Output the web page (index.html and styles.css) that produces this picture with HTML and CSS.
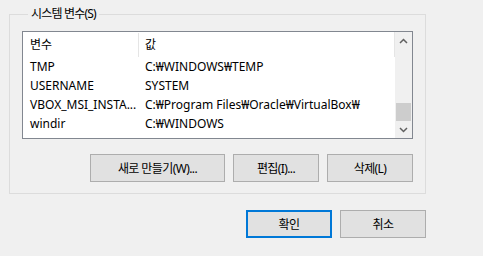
FILE: index.html
```html
<!DOCTYPE html>
<html lang="ko">
<head>
    <meta charset="UTF-8">
    <title>환경 변수</title>
    <link rel="stylesheet" href="styles.css">
</head>
<body>

    <!-- System variables group -->
    <fieldset class="group">
        <legend>시스템 변수(S)</legend>

        <div class="listbox">
            <div class="list">
                <div class="list-head">
                    <div class="col-name">변수</div>
                    <div class="col-value">값</div>
                </div>
                <div class="row">
                    <div class="col-name">TMP</div>
                    <div class="col-value">C:₩WINDOWS₩TEMP</div>
                </div>
                <div class="row">
                    <div class="col-name">USERNAME</div>
                    <div class="col-value">SYSTEM</div>
                </div>
                <div class="row">
                    <div class="col-name">VBOX_MSI_INSTA...</div>
                    <div class="col-value">C:₩Program Files₩Oracle₩VirtualBox₩</div>
                </div>
                <div class="row">
                    <div class="col-name">windir</div>
                    <div class="col-value">C:₩WINDOWS</div>
                </div>
            </div>

            <!-- Vertical scrollbar -->
            <div class="scrollbar">
                <div class="sb-btn">
                    <svg width="9" height="6" viewBox="0 0 9 6"><path d="M1 5 L4.5 1.5 L8 5" fill="none" stroke="#606060" stroke-width="1.5"/></svg>
                </div>
                <div class="sb-track"></div>
                <div class="sb-thumb"></div>
                <div class="sb-btn">
                    <svg width="9" height="6" viewBox="0 0 9 6"><path d="M1 1 L4.5 4.5 L8 1" fill="none" stroke="#606060" stroke-width="1.5"/></svg>
                </div>
            </div>
        </div>

        <div class="group-buttons">
            <button class="btn btn-new">새로 만들기(W)...</button>
            <button class="btn btn-small">편집(I)...</button>
            <button class="btn btn-small">삭제(L)</button>
        </div>
    </fieldset>

    <!-- Dialog buttons -->
    <div class="dialog-buttons">
        <button class="btn btn-small btn-default">확인</button>
        <button class="btn btn-small">취소</button>
    </div>

</body>
</html>
```

FILE: styles.css
```css
* {
    margin: 0;
    padding: 0;
    box-sizing: border-box;
}

body {
    font-family: 'Noto Sans', 'Noto Sans CJK KR', sans-serif;
    font-size: 12px;
    line-height: 16px;
    color: #000;
    background-color: #f0f0f0;
    width: 483px;
    height: 256px;
    overflow: hidden;
    padding-left: 9px;
}

/* Group box */
.group {
    width: 417px;
    margin-top: 6px;
    border: 1px solid #dcdcdc;
    padding: 9px 12px 11px 12px;
}

.group legend {
    margin-left: 6px;
    padding: 0 3px;
    line-height: 16px;
    letter-spacing: -0.8px;
}

/* List view */
.listbox {
    display: flex;
    height: 108px;
    border: 1px solid #828790;
    background-color: #fff;
}

.list {
    flex: 1;
}

.list-head,
.row {
    display: flex;
    white-space: nowrap;
}

.list-head {
    height: 25px;
    align-items: center;
    border-right: 1px solid #e5e5e5;
}

.list-head .col-name {
    border-right: 1px solid #e5e5e5;
    height: 24px;
    line-height: 24px;
}

.row {
    height: 19px;
    line-height: 19px;
}

.col-name {
    width: 116px;
    padding-left: 7px;
}

.col-value {
    padding-left: 6px;
}

/* Scrollbar */
.scrollbar {
    width: 17px;
    background-color: #f0f0f0;
    display: flex;
    flex-direction: column;
}

.sb-btn {
    height: 17px;
    display: flex;
    justify-content: center;
    align-items: center;
}

.sb-track {
    flex: 1;
}

.sb-thumb {
    height: 18px;
    margin: 0 1px;
    background-color: #cdcdcd;
}

/* Buttons */
.group-buttons,
.dialog-buttons {
    display: flex;
    justify-content: flex-end;
    gap: 8px;
}

.group-buttons {
    margin-top: 15px;
}

.dialog-buttons {
    width: 417px;
    margin-top: 16px;
}

.btn {
    height: 28px;
    font-family: inherit;
    font-size: 12px;
    letter-spacing: -0.6px;
    color: #000;
    background-color: #e1e1e1;
    border: 1px solid #adadad;
}

.btn-new {
    width: 135px;
}

.btn-small {
    width: 86px;
}

.btn-default {
    border: 2px solid #0078d7;
}
```
